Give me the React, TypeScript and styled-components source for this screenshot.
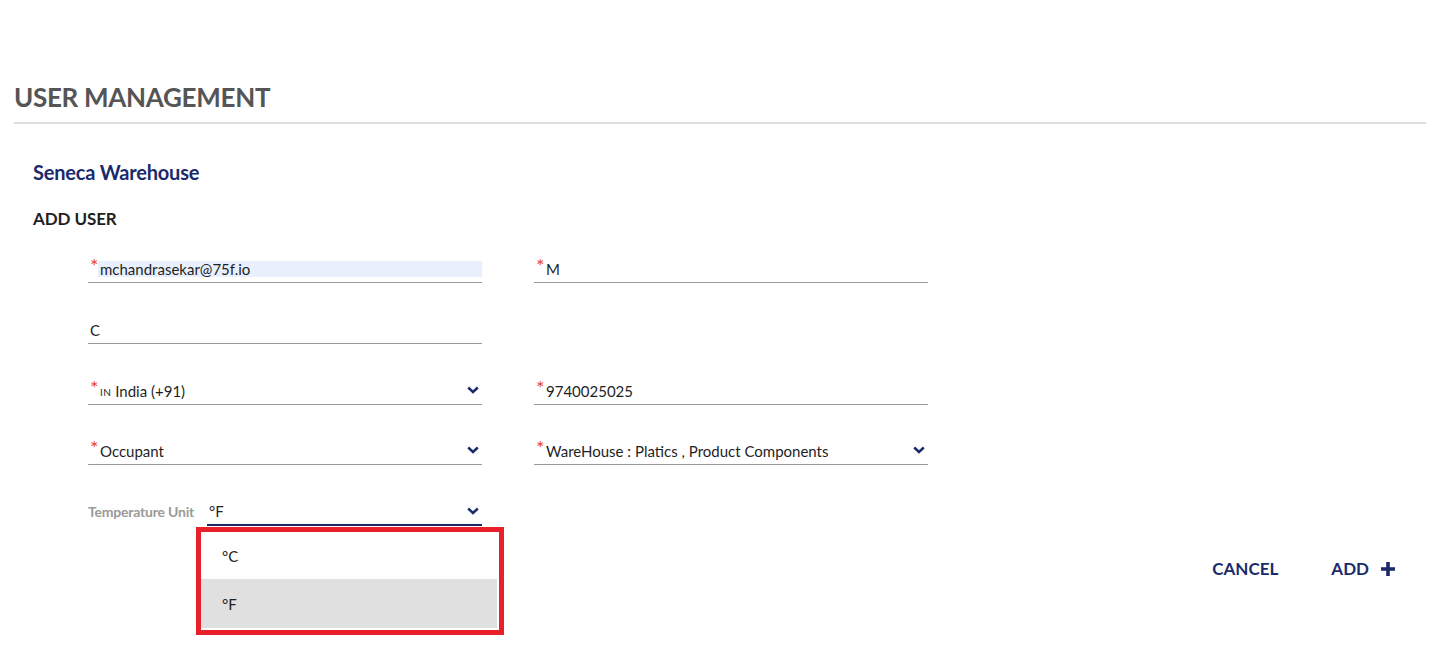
import { createGlobalStyle } from "styled-components";
import styled from "styled-components";

const NAVY = "#1b2a6b";

const GlobalStyle = createGlobalStyle`
  html, body {
    margin: 0;
    padding: 0;
    background: #ffffff;
    font-family: Lato, "Open Sans", "Liberation Sans", sans-serif;
  }
  * {
    box-sizing: border-box;
  }
`;

const Page = styled.div`
  min-height: 100vh;
  padding: 80px 3px 0 14px;
`;

const PageTitle = styled.h1`
  margin: 0;
  font-size: 26px;
  line-height: 34px;
  font-weight: 700;
  color: #555555;
  letter-spacing: -0.3px;
`;

const Divider = styled.hr`
  margin: 8px 0 0;
  border: 0;
  height: 2px;
  background: #dedede;
`;

const Section = styled.section`
  padding-left: 19px;
`;

const SiteName = styled.h2`
  margin: 36px 0 0;
  font-size: 20px;
  line-height: 24px;
  font-weight: 700;
  color: ${NAVY};
  letter-spacing: -0.2px;
`;

const FormTitle = styled.h3`
  margin: 25px 0 0;
  font-size: 17px;
  line-height: 20px;
  font-weight: 700;
  color: #1f1f1f;
  letter-spacing: -0.1px;
`;

const FieldGrid = styled.div`
  margin: 24px 0 0 74px;
  display: grid;
  grid-template-columns: 394px 394px;
  column-gap: 52px;
  row-gap: 30.8px;
`;

const Field = styled.div<{ $focused?: boolean }>`
  height: 30px;
  display: flex;
  align-items: flex-end;
  padding-bottom: 5px;
  border-bottom: ${p => (p.$focused ? `2px solid ${NAVY}` : "1px solid #9a9a9a")};
`;

const Required = styled.span`
  align-self: flex-start;
  margin-top: 3px;
  padding-left: 2px;
  width: 10px;
  font-size: 20px;
  line-height: 18px;
  color: #e8452c;
`;

const Value = styled.span<{ $filled?: boolean }>`
  flex: 1;
  font-size: 15px;
  line-height: 18px;
  height: 16px;
  display: flex;
  align-items: center;
  color: #1f1f1f;
  padding-left: 2px;
  background: ${p => (p.$filled ? "#e8f0fe" : "transparent")};
  white-space: nowrap;
`;

const CountryCode = styled.span`
  font-size: 10px;
  letter-spacing: 0.4px;
  margin-right: 4px;
  margin-top: 2px;
`;

const Chevron = styled.svg`
  flex: none;
  width: 12px;
  height: 8px;
  margin: 0 3px 0 8px;
  align-self: center;
  transform: translateY(3px);
`;

const TempRow = styled.div`
  display: flex;
  align-items: flex-end;
`;

const TempLabel = styled.span`
  width: 119px;
  font-size: 14px;
  line-height: 16px;
  font-weight: 700;
  color: #9a9a9a;
  padding-bottom: 6px;
  letter-spacing: -0.2px;
`;

const SelectWrap = styled.div`
  position: relative;
  flex: 1;
`;

const Menu = styled.ul`
  position: absolute;
  left: -11px;
  top: calc(100% + 1px);
  margin: 0;
  padding: 0 2px 2px 0;
  list-style: none;
  width: 308px;
  height: 108px;
  border: 5px solid #e8202a;
  background: #ffffff;
  z-index: 2;
`;

const MenuItem = styled.li<{ $selected?: boolean }>`
  height: ${p => (p.$selected ? "49px" : "47px")};
  display: flex;
  align-items: center;
  padding-left: 21px;
  font-size: 15px;
  color: #222222;
  background: ${p => (p.$selected ? "#e0e0e0" : "#ffffff")};
`;

const Actions = styled.div`
  margin-top: 33px;
  display: flex;
  justify-content: flex-end;
  gap: 53px;
  padding-right: 30px;
`;

const ActionButton = styled.button`
  display: flex;
  align-items: center;
  gap: 11px;
  border: 0;
  background: transparent;
  padding: 0;
  font-family: inherit;
  font-size: 17px;
  line-height: 20px;
  font-weight: 700;
  color: ${NAVY};
  letter-spacing: 0;
  cursor: pointer;
`;

const ChevronIcon = () => (
  <Chevron viewBox="0 0 12 8">
    <path d="M1.2 1.5 L6 6 L10.8 1.5" fill="none" stroke={NAVY} strokeWidth="2.4" />
  </Chevron>
);

const PlusIcon = () => (
  <svg width="16" height="16" viewBox="0 0 16 16">
    <path d="M8 1 V15 M1 8 H15" stroke={NAVY} strokeWidth="3.6" fill="none" />
  </svg>
);

export default function App() {
  return (
    <>
      <GlobalStyle />
      <Page>
        <PageTitle>USER MANAGEMENT</PageTitle>
        <Divider />
        <Section>
          <SiteName>Seneca Warehouse</SiteName>
          <FormTitle>ADD USER</FormTitle>
        </Section>
        <FieldGrid>
          <Field>
            <Required>*</Required>
            <Value $filled>mchandrasekar@75f.io</Value>
          </Field>
          <Field>
            <Required>*</Required>
            <Value>M</Value>
          </Field>

          <Field>
            <Value>C</Value>
          </Field>
          <div />

          <Field>
            <Required>*</Required>
            <Value>
              <CountryCode>IN</CountryCode>India (+91)
            </Value>
            <ChevronIcon />
          </Field>
          <Field>
            <Required>*</Required>
            <Value>9740025025</Value>
          </Field>

          <Field>
            <Required>*</Required>
            <Value>Occupant</Value>
            <ChevronIcon />
          </Field>
          <Field>
            <Required>*</Required>
            <Value>WareHouse : Platics , Product Components</Value>
            <ChevronIcon />
          </Field>

          <TempRow>
            <TempLabel>Temperature Unit</TempLabel>
            <SelectWrap>
              <Field $focused>
                <Value>°F</Value>
                <ChevronIcon />
              </Field>
              <Menu>
                <MenuItem>°C</MenuItem>
                <MenuItem $selected>°F</MenuItem>
              </Menu>
            </SelectWrap>
          </TempRow>
        </FieldGrid>
        <Actions>
          <ActionButton>CANCEL</ActionButton>
          <ActionButton>
            ADD
            <PlusIcon />
          </ActionButton>
        </Actions>
      </Page>
    </>
  );
}
